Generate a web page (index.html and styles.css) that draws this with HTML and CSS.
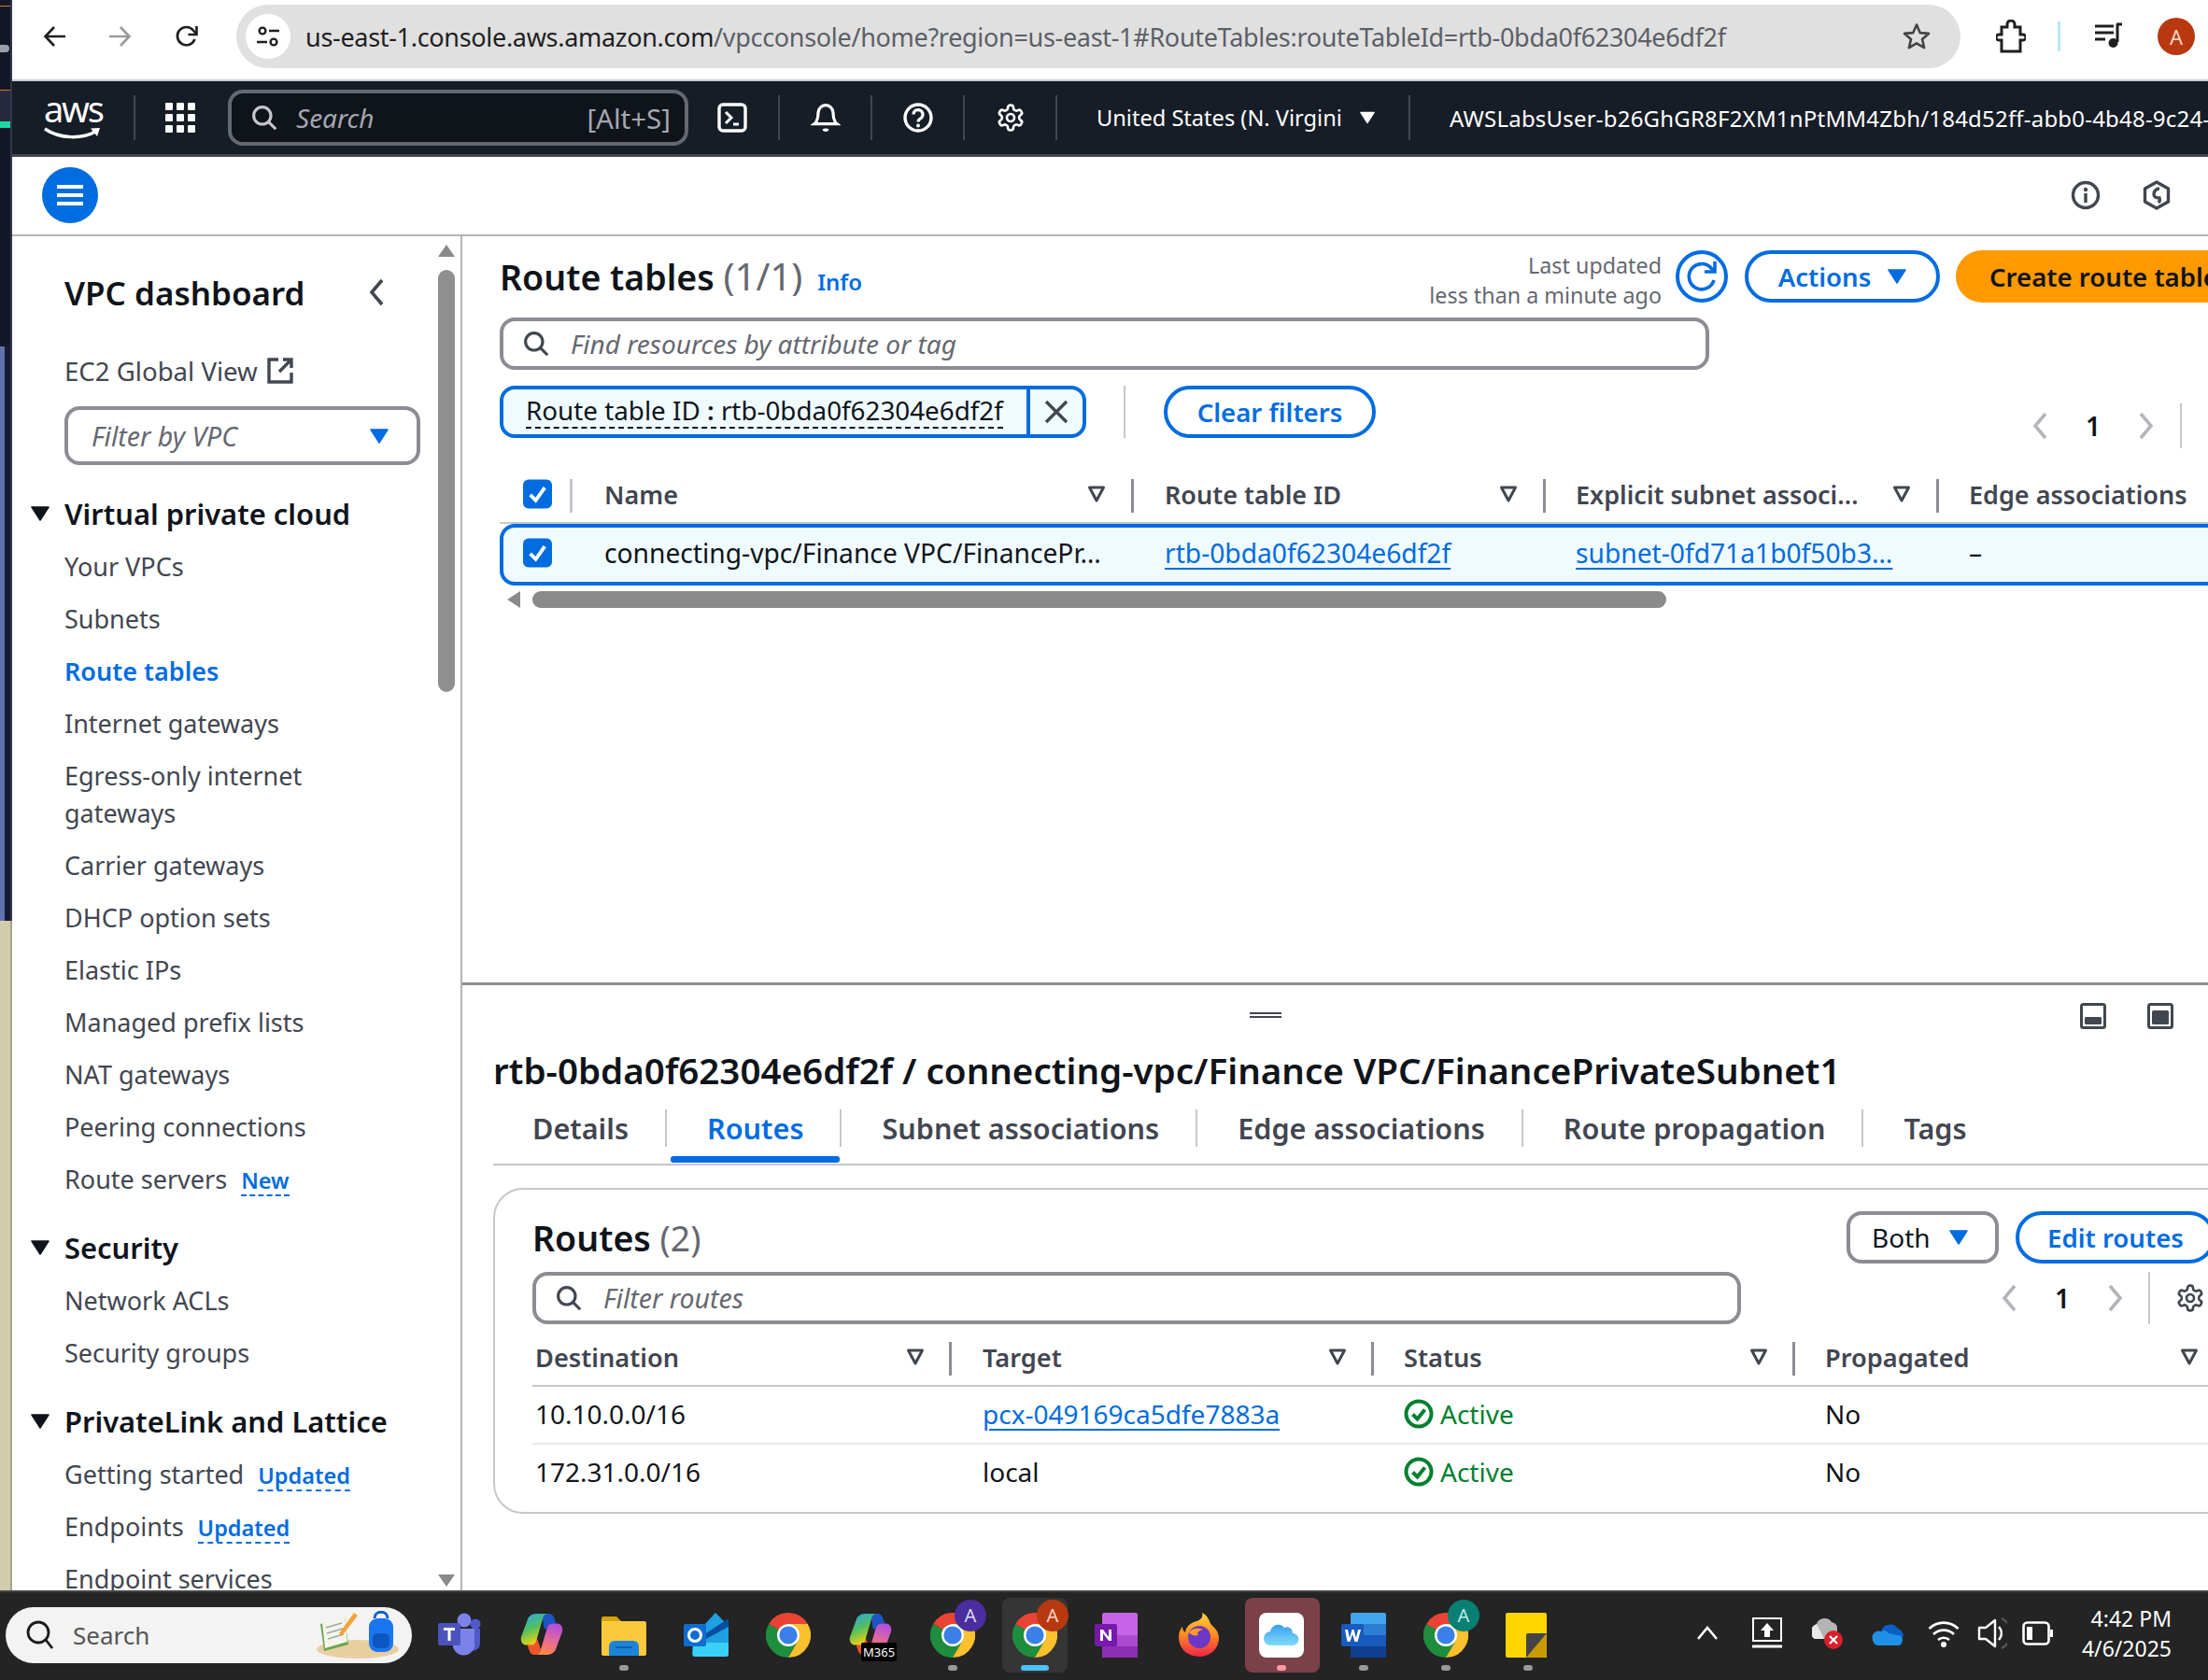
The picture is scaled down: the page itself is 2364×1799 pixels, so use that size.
FILE: index.html
```html
<!DOCTYPE html>
<html lang="en">
<head>
<meta charset="utf-8">
<title>Route tables | VPC Console</title>
<link rel="stylesheet" href="styles.css">
</head>
<body>
<svg class="defs" width="0" height="0" aria-hidden="true">
  <symbol id="i-search" viewBox="0 0 32 32"><circle cx="13.5" cy="13.5" r="10.5" fill="none" stroke="currentColor" stroke-width="3.6"/><path d="M21 21l9 9" fill="none" stroke="currentColor" stroke-width="3.6"/></symbol>
  <symbol id="i-sort" viewBox="0 0 20 20"><path d="M2.5 3h15L10 17z" fill="none" stroke="currentColor" stroke-width="3" stroke-linejoin="round"/></symbol>
  <symbol id="i-caret" viewBox="0 0 20 16"><path d="M1 1h18L10 15z" fill="currentColor" stroke="currentColor" stroke-width="1.5" stroke-linejoin="round"/></symbol>
  <symbol id="i-check" viewBox="0 0 32 32"><rect width="32" height="32" rx="6" fill="#006ce0"/><path d="M8 17l6 6 10-14" fill="none" stroke="#fff" stroke-width="4"/></symbol>
  <symbol id="i-gear" viewBox="0 0 24 24"><g fill="none" stroke="currentColor" stroke-width="2"><path d="M12.22 2h-.44a2 2 0 0 0-2 2v.18a2 2 0 0 1-1 1.73l-.43.25a2 2 0 0 1-2 0l-.15-.08a2 2 0 0 0-2.73.73l-.22.38a2 2 0 0 0 .73 2.73l.15.1a2 2 0 0 1 1 1.72v.51a2 2 0 0 1-1 1.74l-.15.09a2 2 0 0 0-.73 2.73l.22.38a2 2 0 0 0 2.73.73l.15-.08a2 2 0 0 1 2 0l.43.25a2 2 0 0 1 1 1.73V20a2 2 0 0 0 2 2h.44a2 2 0 0 0 2-2v-.18a2 2 0 0 1 1-1.73l.43-.25a2 2 0 0 1 2 0l.15.08a2 2 0 0 0 2.73-.73l.22-.39a2 2 0 0 0-.73-2.73l-.15-.08a2 2 0 0 1-1-1.74v-.5a2 2 0 0 1 1-1.74l.15-.09a2 2 0 0 0 .73-2.73l-.22-.38a2 2 0 0 0-2.73-.73l-.15.08a2 2 0 0 1-2 0l-.43-.25a2 2 0 0 1-1-1.73V4a2 2 0 0 0-2-2z"/><circle cx="12" cy="12" r="3"/></g></symbol>
  <symbol id="i-left" viewBox="0 0 20 32"><path d="M15 3L4 16l11 13" fill="none" stroke="currentColor" stroke-width="3.6"/></symbol>
  <symbol id="i-right" viewBox="0 0 20 32"><path d="M5 3l11 13L5 29" fill="none" stroke="currentColor" stroke-width="3.6"/></symbol>
  <symbol id="i-ok" viewBox="0 0 32 32"><circle cx="16" cy="16" r="13.5" fill="none" stroke="#00802f" stroke-width="4"/><path d="M9.5 16.5l5 5 8-10" fill="none" stroke="#00802f" stroke-width="4"/></symbol>
  <symbol id="i-chrome" viewBox="0 0 48 48">
    <path d="M3.2 12A24 24 0 0 0 24 48L34.4 30 24 24z" fill="#1e8e3e"/>
    <path d="M44.8 12A24 24 0 0 1 24 48L34.4 30 24 12z" fill="#fbc02d"/>
    <path d="M3.2 12A24 24 0 0 1 44.8 12H24A12 12 0 0 0 13.6 18z" fill="#ea4335"/>
    <circle cx="24" cy="24" r="12" fill="#fff"/><circle cx="24" cy="24" r="9.6" fill="#3b7fe8"/>
  </symbol>
  <linearGradient id="cp1" x1="0" y1="0" x2=".4" y2="1"><stop offset="0" stop-color="#20a4f3"/><stop offset=".55" stop-color="#58c05a"/><stop offset="1" stop-color="#f4d20e"/></linearGradient>
  <linearGradient id="cp2" x1=".6" y1="0" x2=".3" y2="1"><stop offset="0" stop-color="#b14fe0"/><stop offset=".6" stop-color="#ec6f8a"/><stop offset="1" stop-color="#ff8c3b"/></linearGradient>
  <symbol id="i-copilot" viewBox="0 0 48 48">
    <path d="M25 7c1-4 3-6 7-6 3 0 5 2 6 5l2 6h-4c-3 0-5 2-6 5l-3 2z" fill="#1a56c4"/>
    <path d="M23 41c-1 4-3 6-7 6-3 0-5-2-6-5l-2-6h2c3 0 5-2 6-5l3-2z" fill="#f0542d"/>
    <path d="M18 1h14c-4 0-6 2-7 6l-7 24c-1 3-3 5-6 5H7C2 36 0 31 1 27L8 8c1-4 5-7 10-7z" fill="url(#cp1)"/>
    <path d="M30 47H16c4 0 6-2 7-6l7-24c1-3 3-5 6-5h5c5 0 7 5 6 9l-7 19c-1 4-5 7-10 7z" fill="url(#cp2)"/>
  </symbol>
</svg>

<div class="top">
  <div class="strip">
    <div class="s-a"></div><div class="s-orange"></div><div class="s-b"><span class="s-eye"></span></div><div class="s-orange"></div><div class="s-c"></div><div class="s-teal"></div><div class="s-d"></div><div class="s-blue"></div><div class="s-sand"></div>
  </div>
  <div class="app">
    <header class="chrome">
      <span class="tb-btn tb-first"><svg width="26" height="26" viewBox="0 0 26 26"><path d="M24 13H3M12 3L2.5 13 12 23" fill="none" stroke="#1f1f1f" stroke-width="2.6"/></svg></span>
      <span class="tb-btn"><svg width="26" height="26" viewBox="0 0 26 26"><path d="M2 13h21M14 3l9.5 10L14 23" fill="none" stroke="#9a9a9a" stroke-width="2.6"/></svg></span>
      <span class="tb-btn"><svg width="28" height="28" viewBox="0 0 28 28"><path d="M22.5 17a9.6 9.6 0 1 1-1.6-9.5L24 11" fill="none" stroke="#1f1f1f" stroke-width="2.6"/><path d="M24.5 3v9h-9" fill="none" stroke="#1f1f1f" stroke-width="2.6"/></svg></span>
      <div class="omni">
        <span class="tune"><svg width="26" height="26" viewBox="0 0 26 26"><g fill="none" stroke="#1f1f1f" stroke-width="2.4"><circle cx="7" cy="7" r="3.4"/><path d="M14 7h11M1 19h11"/><circle cx="19" cy="19" r="3.4"/></g></svg></span>
        <span class="url"><span class="url-host">us-east-1.console.aws.amazon.com</span>/vpcconsole/home?region=us-east-1#RouteTables:routeTableId=rtb-0bda0f62304e6df2f</span>
        <svg class="star" width="32" height="32" viewBox="0 0 32 32"><path d="M16 3.5l3.7 8.6 9.3.8-7 6.1 2.1 9.1L16 23.3l-8.1 4.8L10 19 3 12.9l9.3-.8z" fill="none" stroke="#444" stroke-width="2.6" stroke-linejoin="round"/></svg>
      </div>
      <span class="tb-ext"><svg width="32" height="36" viewBox="0 0 32 36"><path d="M6 8h6V5a4 4 0 0 1 8 0v3h6v8h3a3 3 0 0 1 0 6h-3v12H6V22H3a3 3 0 0 1 0-6h3z" fill="none" stroke="#1f1f1f" stroke-width="3"/></svg></span>
      <span class="tb-sep"></span>
      <span class="tb-media"><svg width="32" height="32" viewBox="0 0 32 32"><path d="M1 5h20M1 12h20M1 19h11" fill="none" stroke="#1f1f1f" stroke-width="3"/><path d="M24 3h6M25 3v19" fill="none" stroke="#1f1f1f" stroke-width="3"/><circle cx="20.5" cy="23" r="5" fill="#1f1f1f"/></svg></span>
      <span class="avatar">A</span>
    </header>

    <nav class="awsbar">
      <div class="awslogo"><span class="awsword">aws</span><svg class="smile" width="62" height="14" viewBox="0 0 62 14"><path d="M1 2c16 11 40 11 54 3" fill="none" stroke="#fff" stroke-width="3.4"/><path d="M50 1.5l10-.5-3 9" fill="#fff"/></svg></div>
      <span class="nav-sep nav-sep-a"></span>
      <svg class="grid9" width="32" height="32" viewBox="0 0 32 32"><g fill="#fff"><rect width="8" height="8" rx="1"/><rect x="12" width="8" height="8" rx="1"/><rect x="24" width="8" height="8" rx="1"/><rect y="12" width="8" height="8" rx="1"/><rect x="12" y="12" width="8" height="8" rx="1"/><rect x="24" y="12" width="8" height="8" rx="1"/><rect y="24" width="8" height="8" rx="1"/><rect x="12" y="24" width="8" height="8" rx="1"/><rect x="24" y="24" width="8" height="8" rx="1"/></g></svg>
      <div class="navsearch"><svg class="ico-search" width="28" height="28"><use href="#i-search"/></svg><span class="ns-text">Search</span><span class="ns-key">[Alt+S]</span></div>
      <span class="nav-cell nav-shell"><svg width="32" height="32" viewBox="0 0 32 32"><rect x="2" y="2" width="28" height="28" rx="4" fill="none" stroke="#fff" stroke-width="3.4"/><path d="M9 10l6 6-6 6M17 23h6" fill="none" stroke="#fff" stroke-width="3"/></svg></span>
      <span class="nav-sep"></span>
      <span class="nav-cell"><svg width="32" height="32" viewBox="0 0 24 24"><path d="M6 8a6 6 0 0 1 12 0c0 7 3 9 3 9H3s3-2 3-9" fill="none" stroke="#fff" stroke-width="2.4"/><path d="M10.3 21a1.94 1.94 0 0 0 3.4 0" fill="none" stroke="#fff" stroke-width="2.4"/></svg></span>
      <span class="nav-sep"></span>
      <span class="nav-cell"><svg width="32" height="32" viewBox="0 0 32 32"><circle cx="16" cy="16" r="14" fill="none" stroke="#fff" stroke-width="3.4"/><path d="M11 12.5a5 5 0 1 1 7.5 4.4c-1.6 1-2.5 1.800-2.500 3.600" fill="none" stroke="#fff" stroke-width="3.2"/><circle cx="16" cy="24.500" r="2" fill="#fff"/></svg></span>
      <span class="nav-sep"></span>
      <span class="nav-cell"><svg class="white" width="32" height="32"><use href="#i-gear"/></svg></span>
      <span class="nav-sep"></span>
      <span class="nav-region">United States (N. Virgini</span>
      <svg class="nav-tri" width="16" height="14"><use href="#i-caret"/></svg>
      <span class="nav-sep"></span>
      <span class="nav-account">AWSLabsUser-b26GhGR8F2XM1nPtMM4Zbh/184d52ff-abb0-4b48-9c24-5c1f</span>
    </nav>

    <div class="utilbar">
      <span class="hamburger"><svg width="30" height="28" viewBox="0 0 30 28"><path d="M1 5h28M1 14h28M1 23h28" stroke="#fff" stroke-width="4"/></svg></span>
      <span class="util-right">
        <svg width="32" height="32" viewBox="0 0 32 32"><circle cx="16" cy="16" r="13.500" fill="none" stroke="#424650" stroke-width="3.4"/><circle cx="16" cy="10" r="2.200" fill="#424650"/><path d="M16 14v10" stroke="#424650" stroke-width="3.4"/></svg>
        <svg width="32" height="32" viewBox="0 0 32 32"><path d="M16 2l12.500 7v14L16 30 3.500 23V9z" fill="none" stroke="#424650" stroke-width="3.4" stroke-linejoin="round"/><path d="M19 9a6 6 0 0 0-6 6c0 3 3 4 6 4 0 0 1 3-1 5" fill="none" stroke="#424650" stroke-width="3.400"/></svg>
      </span>
    </div>

    <div class="body">
      <aside class="side">
        <div class="side-nav">
          <div class="side-head"><span>VPC dashboard</span><svg class="c-sec" width="20" height="32"><use href="#i-left"/></svg></div>
          <div class="side-ec2">EC2 Global View <svg class="ext" width="28" height="28" viewBox="0 0 28 28"><path d="M12 2H2v24h24V16" fill="none" stroke="#424650" stroke-width="3.4"/><path d="M17 2h9v9M26 2L13 15" fill="none" stroke="#424650" stroke-width="3.4"/></svg></div>
          <div class="side-select"><span>Filter by VPC</span><svg class="c-blue" width="20" height="16"><use href="#i-caret"/></svg></div>
          <div class="side-group g1"><svg class="c-ink" width="20" height="16"><use href="#i-caret"/></svg>Virtual private cloud</div>
          <ul class="side-list">
            <li>Your VPCs</li><li>Subnets</li><li class="on">Route tables</li><li>Internet gateways</li>
            <li>Egress-only internet gateways</li><li>Carrier gateways</li><li>DHCP option sets</li><li>Elastic IPs</li>
            <li>Managed prefix lists</li><li>NAT gateways</li><li>Peering connections</li>
            <li>Route servers <span class="tag">New</span></li>
          </ul>
          <div class="side-group"><svg class="c-ink" width="20" height="16"><use href="#i-caret"/></svg>Security</div>
          <ul class="side-list"><li>Network ACLs</li><li>Security groups</li></ul>
          <div class="side-group"><svg class="c-ink" width="20" height="16"><use href="#i-caret"/></svg>PrivateLink and Lattice</div>
          <ul class="side-list"><li>Getting started <span class="tag">Updated</span></li><li>Endpoints <span class="tag">Updated</span></li><li>Endpoint services</li></ul>
        </div>
        <div class="side-scroll">
          <span class="sc-up"></span>
          <span class="sc-thumb"></span>
          <span class="sc-down"></span>
        </div>
      </aside>

      <main class="main">
        <section class="pane-top">
          <div class="head-row">
            <h1 class="page-title">Route tables <span class="count">(1/1)</span> <a class="info">Info</a></h1>
            <div class="updated">Last updated<br>less than a minute ago</div>
            <span class="refresh"><svg width="40" height="40" viewBox="0 0 40 40"><path d="M33 24a13.600 13.600 0 1 1-3-13l3 3" fill="none" stroke="#006ce0" stroke-width="3.600"/><path d="M34 4v11H23" fill="none" stroke="#006ce0" stroke-width="3.600"/></svg></span>
            <span class="btn btn-line">Actions <svg class="c-blue" width="20" height="16"><use href="#i-caret"/></svg></span>
            <span class="btn btn-primary">Create route table</span>
          </div>
          <div class="findbox"><svg class="c-sec" width="28" height="28"><use href="#i-search"/></svg><span>Find resources by attribute or tag</span></div>
          <div class="token-row">
            <div class="token"><span class="token-text"><span>Route table ID <b>:</b> rtb-0bda0f62304e6df2f</span></span><span class="token-x"><svg width="26" height="26" viewBox="0 0 26 26"><path d="M2 2l22 22M24 2L2 24" stroke="#424650" stroke-width="3.400"/></svg></span></div>
            <span class="vr"></span>
            <span class="btn btn-line btn-clear">Clear filters</span>
            <div class="pager pager-a">
              <span class="pg"><svg class="c-mute" width="20" height="32"><use href="#i-left"/></svg></span><span class="pg pg-n">1</span><span class="pg"><svg class="c-mute" width="20" height="32"><use href="#i-right"/></svg></span><span class="pg-sep"></span>
            </div>
          </div>
          <div class="t1 t1-head">
            <div class="th th-check"><svg width="31" height="32"><use href="#i-check"/></svg></div>
            <div class="th"><span>Name</span><svg class="c-sec" width="20" height="20"><use href="#i-sort"/></svg></div>
            <div class="th"><span>Route table ID</span><svg class="c-sec" width="20" height="20"><use href="#i-sort"/></svg></div>
            <div class="th"><span>Explicit subnet associ…</span><svg class="c-sec" width="20" height="20"><use href="#i-sort"/></svg></div>
            <div class="th th-last"><span>Edge associations</span></div>
          </div>
          <div class="t1 t1-row">
            <div class="td td-check"><svg width="31" height="32"><use href="#i-check"/></svg></div>
            <div class="td">connecting-vpc/Finance VPC/FinancePr…</div>
            <div class="td"><a class="lnk">rtb-0bda0f62304e6df2f</a></div>
            <div class="td"><a class="lnk">subnet-0fd71a1b0f50b3…</a></div>
            <div class="td">–</div>
          </div>
          <div class="hscroll"><span class="hs-left"></span><span class="hs-thumb"></span></div>
        </section>

        <section class="pane-bottom">
          <div class="split-row">
            <span class="handle"></span>
            <span class="split-icons">
              <svg width="28" height="28" viewBox="0 0 28 28"><rect x="1.500" y="1.500" width="25" height="25" rx="2" fill="none" stroke="#424650" stroke-width="3"/><rect x="5" y="15" width="18" height="8" rx="1.500" fill="#424650"/></svg>
              <svg width="28" height="28" viewBox="0 0 28 28"><rect x="1.500" y="1.500" width="25" height="25" rx="2" fill="none" stroke="#424650" stroke-width="3"/><rect x="5" y="8" width="18" height="15" rx="1.500" fill="#424650"/></svg>
            </span>
          </div>
          <h2 class="detail-title">rtb-0bda0f62304e6df2f / connecting-vpc/Finance VPC/FinancePrivateSubnet1</h2>
          <div class="tabs">
            <span class="tab">Details</span><span class="tab tab-on">Routes</span><span class="tab">Subnet associations</span><span class="tab">Edge associations</span><span class="tab">Route propagation</span><span class="tab tab-end">Tags</span>
          </div>
          <div class="card">
            <div class="card-head">
              <h3 class="card-title">Routes <span class="count">(2)</span></h3>
              <span class="btn btn-sel">Both <svg class="c-blue" width="20" height="16"><use href="#i-caret"/></svg></span>
              <span class="btn btn-line btn-edit">Edit routes</span>
            </div>
            <div class="card-filter">
              <div class="findbox findbox-b"><svg class="c-sec" width="28" height="28"><use href="#i-search"/></svg><span>Filter routes</span></div>
              <div class="pager pager-b">
                <span class="pg"><svg class="c-mute" width="20" height="32"><use href="#i-left"/></svg></span><span class="pg pg-n">1</span><span class="pg"><svg class="c-mute" width="20" height="32"><use href="#i-right"/></svg></span><span class="pg-sep pg-sep-b"></span>
                <svg class="c-sec pg-gear" width="32" height="32"><use href="#i-gear"/></svg>
              </div>
            </div>
            <div class="t2 t2-head">
              <div class="th2"><span>Destination</span><svg class="c-sec" width="20" height="20"><use href="#i-sort"/></svg></div>
              <div class="th2"><span>Target</span><svg class="c-sec" width="20" height="20"><use href="#i-sort"/></svg></div>
              <div class="th2"><span>Status</span><svg class="c-sec" width="20" height="20"><use href="#i-sort"/></svg></div>
              <div class="th2 th2-last"><span>Propagated</span><svg class="c-sec" width="20" height="20"><use href="#i-sort"/></svg></div>
            </div>
            <div class="t2 t2-row">
              <div class="td2">10.10.0.0/16</div><div class="td2"><a class="lnk">pcx-049169ca5dfe7883a</a></div><div class="td2 ok"><svg width="32" height="32"><use href="#i-ok"/></svg>Active</div><div class="td2">No</div>
            </div>
            <div class="t2 t2-row t2-end">
              <div class="td2">172.31.0.0/16</div><div class="td2">local</div><div class="td2 ok"><svg width="32" height="32"><use href="#i-ok"/></svg>Active</div><div class="td2">No</div>
            </div>
          </div>
        </section>
      </main>
    </div>
  </div>
</div>

<footer class="taskbar">
  <div class="tsearch">
    <svg class="ts-ico" width="30" height="32" viewBox="0 0 30 32"><circle cx="13" cy="13" r="11" fill="none" stroke="#1b1b1b" stroke-width="2.800"/><path d="M21 21l7 9" stroke="#1b1b1b" stroke-width="2.800"/></svg>
    <span class="ts-text">Search</span>
    <svg class="ts-art" width="92" height="52" viewBox="0 0 92 52">
      <ellipse cx="44" cy="41" rx="44" ry="10" fill="#e8cf9f"/>
      <path d="M4 14l26-8 4 30-26 7z" fill="#6aa34f"/><path d="M6 13l24-8 3 28-24 7z" fill="#f4f4ea"/>
      <path d="M10 18l17-5M11 24l17-5M12 30l17-5" stroke="#9aa" stroke-width="1.500"/>
      <path d="M24 24L40 2l4 3-17 22z" fill="#f2a33a"/>
      <rect x="56" y="8" width="26" height="36" rx="9" fill="#1976ee"/><path d="M62 8c0-9 14-9 14 0" fill="none" stroke="#0f5ec8" stroke-width="3"/>
      <rect x="60" y="24" width="18" height="16" rx="5" fill="#0d58c0"/>
    </svg>
  </div>
  <div class="tapps">
    <span class="tapp"><svg width="48" height="48" viewBox="0 0 48 48"><circle cx="29" cy="8" r="7.500" fill="#7b83eb"/><circle cx="41" cy="12" r="5.500" fill="#5059c9"/><path d="M33 17h13v16a8 8 0 0 1-13 6z" fill="#5059c9"/><path d="M17 17h23v20a12 12 0 0 1-23 0z" fill="#7b83eb"/><rect x="1" y="11" width="24" height="24" rx="2" fill="#4b53bc"/><path d="M7 16h12v3h-4.500v11h-3V19H7z" fill="#fff"/></svg></span>
    <span class="tapp"><svg width="46" height="46"><use href="#i-copilot"/></svg></span>
    <span class="tapp tapp-dot"><svg width="48" height="48" viewBox="0 0 48 48"><path d="M0 6a2 2 0 0 1 2-2h14l5 5H0z" fill="#d9a300"/><path d="M0 9h46a2 2 0 0 1 2 2v33a2 2 0 0 1-2 2H2a2 2 0 0 1-2-2z" fill="#fbc93d"/><path d="M8 36a6 6 0 0 1 6-6h20a6 6 0 0 1 6 6v10H8z" fill="#1c84d8"/><rect x="15" y="36" width="18" height="2" fill="#0c5ea8"/></svg><i class="dot"></i></span>
    <span class="tapp"><svg width="48" height="48" viewBox="0 0 48 48"><path d="M10 26l24-26 14 14v30a3 3 0 0 1-3 3H12a3 3 0 0 1-3-3z" fill="#1ea0e2"/><path d="M10 32h38v12a3 3 0 0 1-3 3H13a3 3 0 0 1-3-3z" fill="#3ad0f5"/><path d="M24 22l24-16v9L24 28z" fill="#0a4ea0"/><rect y="12" width="24" height="24" rx="2" fill="#0f6cd0"/><circle cx="12" cy="24" r="6.500" fill="none" stroke="#fff" stroke-width="3"/></svg></span>
    <span class="tapp"><svg width="48" height="48"><use href="#i-chrome"/></svg></span>
    <span class="tapp"><svg width="46" height="46"><use href="#i-copilot"/></svg><em class="m365">M365</em></span>
    <span class="tapp tapp-dot"><svg width="48" height="48"><use href="#i-chrome"/></svg><b class="badge b-purple">A</b><i class="dot"></i></span>
    <span class="tapp tapp-active"><svg width="48" height="48"><use href="#i-chrome"/></svg><b class="badge b-red">A</b><i class="dot dot-blue"></i></span>
    <span class="tapp"><svg width="48" height="48" viewBox="0 0 48 48"><rect x="8" y="0" width="38" height="48" rx="2" fill="#c764e5"/><rect x="8" y="24" width="38" height="12" fill="#ac4bd0"/><rect x="8" y="36" width="38" height="12" fill="#8b2fb3"/><rect y="12" width="24" height="24" rx="2" fill="#7719aa"/><path d="M6 30V18h3l6 8v-8h3v12h-3l-6-8v8z" fill="#fff"/></svg></span>
    <span class="tapp"><svg width="48" height="48" viewBox="0 0 48 48"><defs><linearGradient id="ff" x1="0" y1="0" x2="0" y2="1"><stop offset="0" stop-color="#ffd53a"/><stop offset=".5" stop-color="#ff8a1f"/><stop offset="1" stop-color="#f0234a"/></linearGradient></defs><path d="M24 47C10 47 2 37 2 26c0-5 2-9 4-11 0 3 1 5 3 6 1-7 6-10 12-12 7-2 7-7 6-9 8 4 7 10 11 14 5 4 7 9 7 13 0 11-9 20-21 20z" fill="url(#ff)"/><circle cx="24" cy="26" r="12" fill="#6c36c6"/><path d="M13 21c4-5 10-5 15-3-4 1-7 3-5 6-4 1-8 0-10-3z" fill="#ff9a2a"/></svg></span>
    <span class="tapp tapp-pink"><svg width="48" height="48" viewBox="0 0 48 48"><defs><linearGradient id="cl" x1="0" y1="0" x2="0" y2="1"><stop offset="0" stop-color="#3aa0f0"/><stop offset="1" stop-color="#80dcf8"/></linearGradient></defs><rect width="48" height="48" rx="8" fill="#fff"/><path d="M13 35a7.500 7.500 0 0 1-1-15c1-7 11-10 15-4 4-2 9 1 9 6a6.500 6.500 0 0 1 0 13z" fill="url(#cl)"/></svg><i class="dot dot-pink"></i></span>
    <span class="tapp tapp-dot"><svg width="48" height="48" viewBox="0 0 48 48"><rect x="10" y="0" width="38" height="48" rx="2" fill="#41a5ee"/><rect x="10" y="12" width="38" height="12" fill="#2b7cd3"/><rect x="10" y="24" width="38" height="12" fill="#185abd"/><rect x="10" y="36" width="38" height="12" fill="#103f91"/><rect y="12" width="24" height="24" rx="2" fill="#185abd"/><path d="M4 18h3l2 9 2.500-9h2l2.500 9 2-9h3l-3.500 13h-3L12 23l-2.500 8h-3z" fill="#fff"/></svg><i class="dot"></i></span>
    <span class="tapp tapp-dot"><svg width="48" height="48"><use href="#i-chrome"/></svg><b class="badge b-teal">A</b><i class="dot"></i></span>
    <span class="tapp tapp-dot"><svg width="48" height="48" viewBox="0 0 48 48"><path d="M2 0h40a2 2 0 0 1 2 2v46H2a2 2 0 0 1-2-2V2a2 2 0 0 1 2-2z" fill="#ffd500"/><path d="M22 48l22-26v24a2 2 0 0 1-2 2z" fill="#c99b00"/><path d="M22 48V24a2 2 0 0 1 2-2h20z" fill="#444"/></svg><i class="dot"></i></span>
  </div>
  <div class="tray">
    <span class="tray-i"><svg width="24" height="16" viewBox="0 0 24 16"><path d="M2 14L12 2l10 12" fill="none" stroke="#fff" stroke-width="2.600"/></svg></span>
    <span class="tray-i"><svg width="32" height="34" viewBox="0 0 32 34"><rect x="1" y="1" width="30" height="24" fill="none" stroke="#fff" stroke-width="2"/><path d="M16 6l7 8h-4v7h-6v-7H9z" fill="#fff"/><path d="M0 31h32" stroke="#fff" stroke-width="3"/></svg></span>
    <span class="tray-i"><svg width="34" height="40" viewBox="0 0 34 40"><path d="M3 26a9 9 0 0 1 2-16c2-7 13-8 16-2 4 1 6 3 6 6v12z" fill="#b4b4b4"/><path d="M3 26a9 9 0 0 1 2-16l8 16z" fill="#e8e8e8"/><circle cx="23" cy="27" r="10" fill="#d8202c"/><path d="M19 23l8 8M27 23l-8 8" stroke="#fff" stroke-width="2.200"/></svg></span>
    <span class="tray-i"><svg width="34" height="34" viewBox="0 0 34 34"><path d="M10 15a10 10 0 0 1 18-3c3 1 6 4 6 8l-16 6z" fill="#0a5fc4"/><path d="M1 24a7 7 0 0 1 9-9c3-2 6-1 8 2l14 3c2 3 1 10-4 10H7c-3 0-6-3-6-6z" fill="#1e90e6"/></svg></span>
    <span class="tray-i"><svg width="34" height="34" viewBox="0 0 34 34"><g fill="none" stroke="#fff" stroke-width="2.600"><path d="M1.500 12a22 22 0 0 1 31 0"/><path d="M6 18a16 16 0 0 1 22 0"/><path d="M11 24a9 9 0 0 1 12 0"/></g><circle cx="17" cy="29" r="3" fill="#fff"/></svg></span>
    <span class="tray-i"><svg width="32" height="40" viewBox="0 0 32 40"><path d="M2 14h7l10-8v28l-10-8H2z" fill="none" stroke="#fff" stroke-width="2.400" stroke-linejoin="round"/><path d="M23 13a10 10 0 0 1 0 14" fill="none" stroke="#fff" stroke-width="2.400"/><path d="M26 4a18 18 0 0 1 0 32" fill="none" stroke="#555" stroke-width="2.400"/></svg></span>
    <span class="tray-i"><svg width="34" height="26" viewBox="0 0 34 26"><rect x="1.500" y="1.500" width="27" height="23" rx="4" fill="none" stroke="#fff" stroke-width="2.600"/><rect x="5" y="6" width="6" height="14" fill="#fff"/><rect x="30" y="9" width="3" height="8" fill="#fff"/></svg></span>
    <div class="clock"><div>4:42 PM</div><div>4/6/2025</div></div>
  </div>
</footer>
</body>
</html>
```

FILE: styles.css
```css
* { box-sizing: border-box; }
html, body { margin: 0; padding: 0; }
body {
  width: 2364px; height: 1799px; overflow: hidden;
  font-family: "Noto Sans", "Open Sans", sans-serif;
  font-size: 28px; color: #0f141a; background: #fff;
}
svg { display: block; flex: none; }
.defs { position: absolute; }
h1, h2, h3 { margin: 0; }
ul { margin: 0; padding: 0; list-style: none; }
a { color: inherit; }
.c-sec { color: #424650; }
.c-blue { color: #006ce0; }
.c-ink { color: #0f141a; }
.c-mute { color: #b4b4bb; }
.white { color: #fff; }

.top { display: flex; height: 1703px; }
.strip { width: 13px; flex: none; display: flex; flex-direction: column; background: #14162a; border-right: 2px solid #33364a; }
.s-a { height: 6px; }
.s-orange { height: 1px; background: #d87a20; }
.s-b { height: 89px; display: flex; align-items: flex-start; }
.s-eye { display: block; width: 10px; height: 8px; margin-top: 41px; background: #9aa0a8; border-radius: 0 5px 5px 0; }
.s-c { height: 33px; background: #272a3f; }
.s-teal { height: 7px; background: #1fd6a0; }
.s-d { height: 234px; }
.s-blue { height: 615px; background: #191b33; border-left: 5px solid #6272ac; }
.s-sand { flex: 1; background: #d2ccae; margin-right: -2px; box-shadow: inset -2px 0 0 #a9a28c; }

.app { width: 2351px; flex: none; display: flex; flex-direction: column; overflow: hidden; }

/* browser toolbar */
.chrome { height: 87px; flex: none; display: flex; align-items: flex-start; border-bottom: 2px solid #c8ccce; padding-top: 5px; }
.tb-btn { width: 72px; height: 68px; display: flex; align-items: center; justify-content: center; flex: none; }
.tb-first { width: 66px; margin-left: 13px; }
.omni { width: 1846px; height: 68px; margin-left: 17px; border-radius: 34px; background: #e0e0e0; display: flex; align-items: center; padding-left: 10px; flex: none; }
.tune { width: 48px; height: 48px; border-radius: 50%; background: #fff; display: flex; align-items: center; justify-content: center; flex: none; }
.url { margin-left: 16px; font-size: 27px; letter-spacing: -0.31px; color: #5c5f66; white-space: nowrap; flex: 1; }
.url-host { color: #1f1f1f; }
.star { margin-right: 31px; }
.tb-ext { margin-left: 38px; height: 68px; display: flex; align-items: center; }
.tb-sep { width: 3px; height: 32px; margin: 18px 0 0 34px; background: #b8e8f0; }
.tb-media { margin-left: 36px; height: 68px; display: flex; align-items: center; }
.avatar { width: 40px; height: 40px; margin: 14px 0 0 36px; border-radius: 50%; background: #b8390f; color: #f6d5c8; font-size: 22px; line-height: 40px; text-align: center; }

/* aws nav */
.awsbar { height: 81px; flex: none; background: #161d26; border-bottom: 3px solid #414750; color: #fff; display: flex; align-items: center; white-space: nowrap; }
.awslogo { width: 62px; margin-left: 34px; height: 44px; flex: none; }
.awsword { display: block; font-size: 38px; line-height: 36px; text-align: center; letter-spacing: -2.2px; margin-top: -6px; }
.smile { margin-top: 2px; }
.nav-sep { width: 2px; height: 48px; background: #414750; flex: none; }
.nav-sep-a { margin-left: 34px; }
.grid9 { margin-left: 32px; }
.navsearch { width: 493px; height: 60px; margin-left: 35px; border: 4px solid #656871; border-radius: 16px; background: #0f141a; display: flex; align-items: center; padding: 0 15px 0 21px; flex: none; }
.ico-search { color: #c6c6cd; }
.ns-text { margin-left: 20px; font-style: italic; color: #a4a7b0; font-size: 28px; flex: 1; }
.ns-key { color: #a4a7b0; font-size: 29.5px; }
.nav-cell { width: 97px; height: 48px; display: flex; align-items: center; justify-content: center; flex: none; }
.nav-shell { width: 65px; margin-left: 31px; justify-content: flex-start; }
.nav-region { margin-left: 42px; font-size: 23.6px; width: 263px; flex: none; }
.nav-tri { margin-left: 19px; color: #fff; }
.nav-tri + .nav-sep { margin-left: 36px; }
.nav-account { margin-left: 42px; font-size: 24px; letter-spacing: 0.2px; }

/* util bar */
.utilbar { height: 85px; flex: none; display: flex; align-items: center; justify-content: space-between; border-bottom: 2px solid #b4b4bb; padding: 0 39px 1px 32px; }
.hamburger { width: 60px; height: 60px; border-radius: 50%; background: #006ce0; display: flex; align-items: center; justify-content: center; }
.util-right { display: flex; gap: 44px; }

.body { flex: 1; min-height: 0; display: flex; }

/* sidebar */
.side { width: 482px; flex: none; display: flex; border-right: 2px solid #b4b4bb; overflow: hidden; background: #fff; }
.side-nav { width: 456px; flex: none; padding: 36px 0 0 56px; }
.side-head { display: flex; justify-content: space-between; align-items: center; font-size: 35px; font-weight: 600; height: 48px; padding-right: 55px; }
.side-ec2 { margin-top: 40px; line-height: 40px; font-size: 27.6px; color: #424650; display: flex; align-items: center; gap: 10px; }
.side-select { width: 381px; height: 63px; margin-top: 18px; border: 4px solid #8c8c94; border-radius: 16px; display: flex; align-items: center; justify-content: space-between; padding: 0 30px 0 25px; font-style: italic; font-size: 28.5px; color: #656871; }
.side-group { margin-top: 25px; line-height: 40px; font-size: 30.9px; font-weight: 600; display: flex; align-items: center; gap: 16px; margin-left: -36px; white-space: nowrap; }
.g1 { margin-top: 32px; }
.side-list { margin-top: 9px; color: #424650; font-size: 27px; }
.side-list li { padding: 8px 0; line-height: 40px; max-width: 340px; }
.side-list li.on { color: #006ce0; font-weight: 600; }
.tag { margin-left: 8px; font-size: 23.5px; font-weight: 600; color: #006ce0; border-bottom: 2px dashed #006ce0; line-height: 30px; display: inline-block; }
.side-scroll { width: 18px; flex: none; display: flex; flex-direction: column; align-items: center; padding-top: 9px; }
.sc-up { width: 0; height: 0; border: 9px solid transparent; border-top: 0; border-bottom: 13px solid #8a8a8a; }
.sc-thumb { width: 18px; height: 452px; margin-top: 14px; border-radius: 9px; background: #8f8f8f; }
.sc-down { width: 0; height: 0; margin-top: 945px; border: 9px solid transparent; border-bottom: 0; border-top: 13px solid #8a8a8a; }

/* main */
.main { width: 1869px; flex: none; display: flex; flex-direction: column; overflow: hidden; }
.pane-top { height: 802px; flex: none; padding: 15px 0 0 40px; border-bottom: 3px solid #8c8c94; overflow: hidden; }
.head-row { display: flex; align-items: center; width: 1911px; height: 56px; }
.page-title { font-size: 37.5px; font-weight: 600; line-height: 56px; flex: 1; white-space: nowrap; padding-top: 6px; }
.count { font-weight: 400; color: #656871; font-size: 1.07em; }
.info { font-size: 24px; font-weight: 600; color: #006ce0; margin-left: 6px; }
.updated { font-size: 23.3px; line-height: 32px; text-align: right; color: #656871; padding-top: 8px; }
.refresh { width: 56px; height: 56px; margin-left: 15px; border: 4px solid #006ce0; border-radius: 50%; display: flex; align-items: center; justify-content: center; flex: none; }
.btn { height: 56px; border-radius: 28px; display: inline-flex; align-items: center; justify-content: center; font-weight: 600; font-size: 27.6px; white-space: nowrap; flex: none; }
.btn-line { border: 4px solid #006ce0; color: #006ce0; background: #fff; }
.head-row .btn-line { width: 209px; margin-left: 18px; gap: 18px; }
.btn-primary { width: 352px; margin-left: 17px; background: #ff9900; color: #0f141a; justify-content: flex-start; padding-left: 36px; }
.findbox { width: 1295px; height: 56px; margin-top: 16px; border: 4px solid #8c8c94; border-radius: 16px; display: flex; align-items: center; gap: 23px; padding-left: 21px; font-style: italic; color: #656871; }
.token-row { display: flex; width: 1829px; height: 56px; margin-top: 17px; }
.token { width: 628px; display: flex; border: 4px solid #006ce0; border-radius: 16px; background: #f0fbff; flex: none; }
.token-text { flex: 1; padding: 0 0 2px 24px; display: flex; align-items: center; font-size: 27.8px; }
.token-text > span { border-bottom: 2px dashed #0f141a; line-height: 36px; }
.token-text b { font-weight: 600; }
.token-x { width: 60px; border-left: 4px solid #006ce0; display: flex; align-items: center; justify-content: center; }
.vr { width: 2px; background: #c6c6cd; margin-left: 40px; flex: none; }
.btn-clear { width: 227px; margin-left: 41px; }
.pager { display: flex; align-items: center; }
.pager-a { margin-left: auto; height: 48px; margin-top: 19px; padding-right: 28px; }
.pg { width: 56px; display: flex; align-items: center; justify-content: center; font-weight: 600; }
.pg-sep { width: 2px; height: 48px; margin-left: 9px; background: #c6c6cd; }
.t1 { display: grid; grid-template-columns: 78px 601px 441px 421px 400px; width: 1941px; }
.t1-head { margin-top: 44px; height: 48px; border-bottom: 2px solid #c6c6cd; align-items: start; }
.th { height: 36px; display: flex; align-items: center; justify-content: space-between; padding: 0 27px 4px 32px; border-right: 3px solid #8c8c94; font-size: 27px; font-weight: 600; color: #424650; white-space: nowrap; }
.th:nth-child(2) { padding-left: 34px; }
.th:nth-child(3) { padding-left: 33px; }
.th-check { padding: 0 0 0 25px; justify-content: flex-start; align-items: flex-start; border-right-color: #c6c6cd; }
.th-last { border-right: 0; }
.t1-row { height: 66px; border: 4px solid #006ce0; border-radius: 16px; background: #f0fbff; grid-template-columns: 74px 601px 441px 421px 400px; align-items: center; padding-bottom: 4px; font-size: 28.2px; }
.td { padding-left: 32px; white-space: nowrap; }
.td:nth-child(2) { padding-left: 34px; }
.td:nth-child(3) { padding-left: 33px; }
.td-check { padding-left: 21px; }
.lnk { color: #006ce0; text-decoration: underline; text-underline-offset: 5px; text-decoration-thickness: 2px; }
.hscroll { display: flex; align-items: center; gap: 13px; height: 18px; margin-top: 6px; padding-left: 8px; }
.hs-left { width: 0; height: 0; border: 9px solid transparent; border-left: 0; border-right: 14px solid #8a8a8a; }
.hs-thumb { width: 1214px; height: 18px; border-radius: 9px; background: #8a8a8a; }

.pane-bottom { flex: 1; min-height: 0; padding-left: 33px; overflow: hidden; }
.split-row { display: flex; align-items: center; height: 28px; margin-top: 18px; padding-left: 810px; padding-right: 37px; }
.handle { width: 34px; height: 6px; border-top: 2px solid #424650; border-bottom: 2px solid #424650; }
.split-icons { display: flex; gap: 44px; margin-left: auto; margin-top: 2px; }
.detail-title { margin-top: 19px; font-size: 38.6px; font-weight: 600; line-height: 52px; white-space: nowrap; }
.tabs { display: flex; width: 1836px; height: 60px; margin-top: 16px; border-bottom: 2px solid #c6c6cd; align-items: flex-start; }
.tab { height: 40px; line-height: 40px; padding: 0 39px 0 43px; font-size: 30.6px; font-weight: 600; color: #424650; border-right: 2px solid #c6c6cd; position: relative; white-space: nowrap; }
.tab:first-child { padding-left: 42px; }
.tab-end { border-right: 0; }
.tab-on { color: #006ce0; }
.tab-on::after { content: ""; position: absolute; left: 4px; right: 0; top: 50px; height: 7px; background: #006ce0; border-radius: 3px; }
.card { width: 1900px; height: 349px; margin-top: 24px; border: 2px solid #c6c6cd; border-radius: 32px; padding: 23px 0 0 40px; }
.card-head { display: flex; align-items: center; width: 1802px; height: 56px; }
.card-title { font-size: 37.5px; font-weight: 600; flex: 1; }
.card-title .count { font-size: 1em; }
.btn-sel { width: 163px; border: 4px solid #8c8c94; border-radius: 16px; font-size: 28px; font-weight: 400; gap: 20px; justify-content: flex-start; padding-left: 23px; }
.btn-edit { width: 214px; margin-left: 18px; }
.card-filter { display: flex; align-items: center; width: 1791px; height: 56px; margin-top: 9px; }
.findbox-b { width: 1294px; margin-top: 0; font-size: 28.5px; }
.pager-b { margin-left: auto; height: 56px; }
.pg-sep-b { height: 56px; margin-left: 8px; }
.pg-gear { margin-left: 27px; }
.t2 { display: grid; grid-template-columns: 449px 452px 451px 438px; width: 1802px; }
.t2-head { height: 48px; margin-top: 19px; border-bottom: 2px solid #c6c6cd; align-items: start; }
.th2 { height: 36px; display: flex; align-items: center; justify-content: space-between; padding: 0 26px 4px 32px; border-right: 3px solid #8c8c94; font-size: 27.2px; font-weight: 600; color: #424650; white-space: nowrap; }
.th2:first-child { padding-left: 3px; }
.th2:nth-child(2) { padding-left: 33px; }
.th2-last { border-right: 0; padding-right: 6px; }
.t2-row { height: 62px; border-bottom: 2px solid #e8e8ed; align-items: center; padding-bottom: 2px; }
.t2-end { border-bottom: 0; height: 60px; }
.td2 { padding-left: 32px; white-space: nowrap; }
.td2:first-child { padding-left: 3px; }
.td2:nth-child(2) { padding-left: 33px; }
.ok { color: #00802f; display: flex; align-items: center; gap: 7px; }

/* taskbar */
.taskbar { height: 96px; display: flex; background: #232423; border-top: 2px solid #444; }
.tsearch { width: 435px; height: 60px; margin: 16px 0 0 6px; border-radius: 30px; background: #f3f3f3; display: flex; align-items: center; padding-left: 22px; flex: none; }
.ts-text { margin-left: 20px; font-size: 26px; color: #555; flex: 1; }
.ts-art { margin-right: 10px; }
.tapps { display: flex; margin-left: 7px; }
.tapp { width: 88px; height: 94px; display: flex; justify-content: center; padding-top: 22px; position: relative; flex: none; }
.tapp-active::before, .tapp-pink::before { content: ""; position: absolute; left: 9px; top: 6px; width: 70px; height: 80px; border-radius: 8px; background: #353535; }
.tapp-pink::before { left: 5px; width: 80px; background: #7b4148; }
.tapp svg { position: relative; }
.dot { position: absolute; left: 39px; top: 78px; width: 10px; height: 6px; border-radius: 3px; background: #999; }
.dot-blue { left: 29px; width: 30px; background: #4cc2ff; }
.dot-pink { left: 39px; background: #ff9aa2; }
.badge { position: absolute; left: 46px; top: 8px; width: 34px; height: 34px; border-radius: 50%; font-size: 20px; line-height: 34px; text-align: center; font-weight: 400; color: #d9d9e8; }
.b-purple { background: #4a2d9e; }
.b-red { background: #b8390f; color: #f6d5c8; }
.b-teal { background: #0a7f73; color: #bfeee6; }
.m365 { position: absolute; left: 34px; top: 54px; background: #000; color: #fff; font-size: 13px; font-style: normal; padding: 0 2px; line-height: 20px; border-radius: 2px; }
.tray { margin-left: 115px; display: grid; grid-template-columns: 65px 64px 65px 64px 56px 48px 50px 118px; align-items: center; height: 94px; padding-bottom: 6px; }
.tray-i { display: flex; justify-content: center; }
.clock { text-align: right; color: #fff; font-size: 23px; line-height: 32px; }
```
